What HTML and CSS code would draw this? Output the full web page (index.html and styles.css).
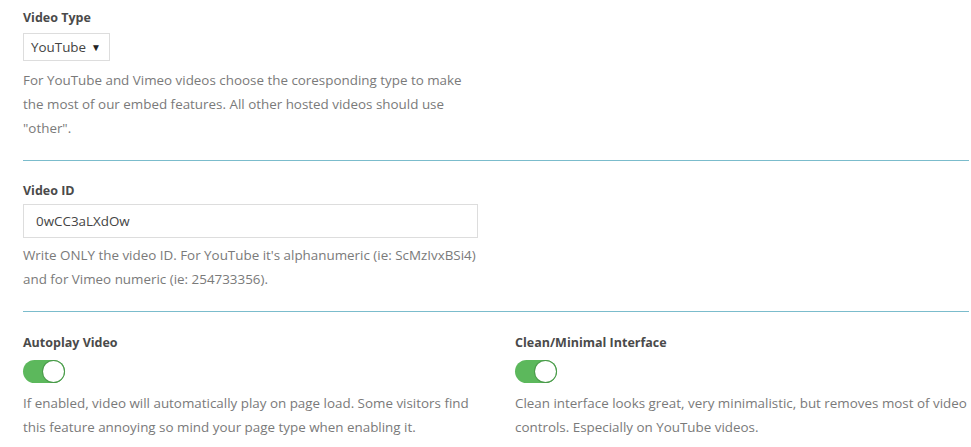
FILE: index.html
```html
<!DOCTYPE html>
<html>
<head>
<meta charset="utf-8">
<link rel="stylesheet" href="styles.css">
</head>
<body>
<div class="page">
  <section class="field">
    <div class="label">Video Type</div>
    <div class="select"><span>YouTube</span><span class="caret">▼</span></div>
    <p class="desc first">For YouTube and Vimeo videos choose the coresponding type to make the most of our embed features. All other hosted videos should use "other".</p>
  </section>
  <hr class="sep">
  <section class="field">
    <div class="label">Video ID</div>
    <div class="input">0wCC3aLXdOw</div>
    <p class="desc second">Write ONLY the video ID. For YouTube it's alphanumeric (ie: ScMzIvxBSi4) and for Vimeo numeric (ie: 254733356).</p>
  </section>
  <hr class="sep">
  <div class="cols">
    <section class="field">
      <div class="label">Autoplay Video</div>
      <div class="toggle"><span class="knob"></span></div>
      <p class="desc tdesc">If enabled, video will automatically play on page load. Some visitors find this feature annoying so mind your page type when enabling it.</p>
    </section>
    <section class="field">
      <div class="label">Clean/Minimal Interface</div>
      <div class="toggle"><span class="knob"></span></div>
      <p class="desc tdesc">Clean interface looks great, very minimalistic, but removes most of video controls. Especially on YouTube videos.</p>
    </section>
  </div>
</div>
</body>
</html>
```
FILE: styles.css
```css
* { box-sizing: border-box; }
html, body { margin: 0; padding: 0; background: #fff; }
body {
  font-family: "Open Sans", "Noto Sans", sans-serif;
  font-size: 13.4px;
  color: #777;
}
.page { padding: 9px 2px 0 23px; }
.field { display: flex; flex-direction: column; align-items: flex-start; }
.label {
  font-weight: 700;
  color: #4a4a4a;
  font-size: 12.5px;
  line-height: 18px;
}
.select {
  margin-top: 6px;
  width: 87px;
  height: 28px;
  border: 1px solid #ddd;
  display: flex;
  align-items: center;
  justify-content: space-between;
  padding: 0 8px 0 7px;
  color: #444;
  font-size: 13.4px;
}
.caret { font-size: 10px; color: #222; }
.desc {
  margin: 7px 0 0;
  line-height: 24px;
  font-size: 13.4px;
  color: #7a7a7a;
}
.first { max-width: 452px; }
.second { margin-top: 5px; max-width: 466px; }
.tdesc { margin-top: 8px; max-width: 470px; }
.sep {
  margin: 20px 0 0;
  border: 0;
  border-top: 1px solid #7bbccc;
  height: 0;
}
.sep + .field { margin-top: 21px; }
.input {
  margin-top: 4px;
  width: 455px;
  height: 34px;
  border: 1px solid #ddd;
  padding: 0 12px;
  display: flex;
  align-items: center;
  color: #444;
  font-size: 13.4px;
}
.cols {
  margin-top: 22px;
  display: grid;
  grid-template-columns: 492px 1fr;
}
.toggle {
  margin-top: 8px;
  width: 42px;
  height: 23px;
  border-radius: 12px;
  background: #5cb85c;
  position: relative;
}
.knob {
  position: absolute;
  right: 1px;
  top: 1px;
  width: 21px;
  height: 21px;
  border-radius: 50%;
  background: #fff;
  box-shadow: 0 0 0 1px #4a9a4a;
}
```
